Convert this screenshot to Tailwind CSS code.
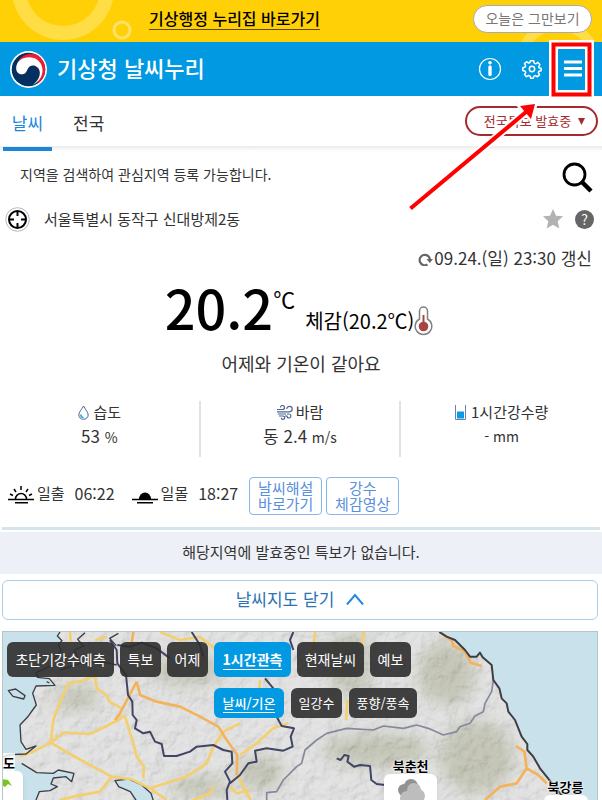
<!DOCTYPE html>
<html lang="ko">
<head>
    <meta charset="UTF-8">
    <meta name="viewport" content="width=device-width, initial-scale=1">
    <title>기상청 날씨누리</title>
    <script src="https://cdn.jsdelivr.net/npm/@tailwindcss/browser@4"></script>
</head>
<body class="relative flex h-screen flex-col overflow-hidden bg-white font-['Noto_Sans_CJK_KR',sans-serif] text-[#333]">

    <!-- Notice banner -->
    <div class="relative flex h-[42px] shrink-0 items-center justify-end overflow-hidden bg-[#ffd006] pr-[10px]">
        <svg class="absolute inset-0 h-full w-full" fill="none" stroke="#ffdd45">
            <circle cx="63" cy="-11" r="44" stroke-width="14"/>
            <circle cx="122" cy="30" r="8" stroke="#ffe168" stroke-width="3"/>
        </svg>
        <svg class="absolute right-0 top-0 h-[42px] w-[90px]" fill="none" stroke="#ffdd45">
            <circle cx="46" cy="62" r="37" stroke-width="10"/>
        </svg>
        <div class="absolute inset-x-0 top-[7px] flex justify-center pr-[133px]">
            <a href="#" class="border-b border-[#5c4b00] text-base leading-[22px] font-medium text-black">기상행정 누리집 바로가기</a>
        </div>
        <button class="relative mb-1 h-7 w-[119px] rounded-full border border-[#a9a9b5] bg-white pb-[2px] text-sm leading-5 text-[#777]">오늘은 그만보기</button>
    </div>

    <!-- Header -->
    <header class="flex h-[54px] shrink-0 items-center bg-[#0099e2] pr-[20px] pl-[10px] text-white">
        <svg class="size-[37px]" viewBox="0 0 108 108">
            <circle cx="54" cy="54" r="54" fill="#fff"/>
            <circle cx="54" cy="54" r="49" fill="#04305f"/>
            <path d="M24 30C36 8 70 -2 90 20C110 44 106 78 80 96L90 60L60 30L30 26Z" fill="#ed1b34"/>
            <path d="M18 50C18 28 38 17 58 18C82 19 96 38 95 58C94 76 84 91 67 99C80 88 88 76 87 62C86 48 77 42 67 42C52 42 52 57 45 64C36 72 18 67 18 50Z" fill="#fff"/>
        </svg>
        <h1 class="mb-1 ml-[10px] text-[22px] leading-8 font-medium">기상청 날씨누리</h1>
        <div class="ml-auto flex items-center">
            <button aria-label="정보" class="mr-[20px]">
                <svg class="size-6" viewBox="0 0 24 24" fill="none" stroke="#fff">
                    <circle cx="12" cy="12" r="10.5" stroke-width="1.2"/>
                    <circle cx="12" cy="5.8" r="1.8" fill="#fff" stroke="none"/>
                    <path d="M12 10V17.5" stroke-width="3.4" stroke-linecap="round"/>
                </svg>
            </button>
            <button aria-label="설정" class="mr-[22px]">
                <svg class="size-5" viewBox="0 0 24 24" fill="none" stroke="#fff" stroke-width="1.8" stroke-linejoin="round">
                    <circle cx="12" cy="12" r="3.2"/>
                    <path d="M10 2h4l.6 3 1.8.8L19 4l2.5 2.8-1.5 2.6.6 1.3L23 11v3l-2.7.8-.7 1.6 1.4 2.6-2.5 2.3-2.5-1.4-1.6.7L13.5 23h-3l-.8-2.5-1.7-.7-2.7 1.4L3 18.7l1.5-2.4-.7-1.7L1 13.700v-3.200l2.700-.8.7-1.600L3 5.500 5.500 3.300 8 4.900l1.500-.6z"/>
                </svg>
            </button>
            <button aria-label="메뉴">
                <svg class="h-[18px] w-[18px]" viewBox="0 0 18 18" stroke="#fff" stroke-width="3">
                    <path d="M0 2h18M0 8.500h18M0 15h18"/>
                </svg>
            </button>
        </div>
    </header>

    <!-- Tabs -->
    <nav class="flex h-[55px] shrink-0 items-stretch justify-between bg-linear-to-b from-white from-90% via-[#ececec] via-92% to-white pr-1 pl-[3px]">
        <div class="flex text-[17px] leading-[54px]">
            <a href="#" class="w-[49px] border-b-4 border-[#1b87dc] text-center text-[#1b87dc]">날씨</a>
            <a href="#" class="ml-[21px]">전국</a>
        </div>
        <button class="mt-[10px] flex h-[30px] w-[133px] items-center justify-center gap-[7px] rounded-full border-2 border-[#a52a2d] bg-white pl-[6px] text-[13px] text-[#a52a2d]">
            전국특보 발효중
            <svg class="size-[7px]" viewBox="0 0 7 7" fill="#a52a2d"><path d="M0 0h7L3.500 7z"/></svg>
        </button>
    </nav>

    <!-- Search and location -->
    <div class="flex h-[46px] shrink-0 items-center justify-between pr-[9px] pl-5">
        <p class="text-sm">지역을 검색하여 관심지역 등록 가능합니다.</p>
        <button aria-label="검색" class="mt-[6px]">
            <svg class="size-[31px]" viewBox="0 0 31 31" fill="none" stroke="#000">
                <circle cx="12.500" cy="12.500" r="10.500" stroke-width="2.800"/>
                <path d="M20.500 20.500L29 29" stroke-width="4.500"/>
            </svg>
        </button>
    </div>
    <div class="flex h-11 shrink-0 items-center pr-2 pl-[5px]">
        <button aria-label="현재 위치">
            <svg class="size-[25px]" viewBox="0 0 25 25" fill="none">
                <circle cx="12.500" cy="12.500" r="11.800" stroke="#b4b9c5"/>
                <circle cx="12.500" cy="12.500" r="8.500" stroke="#000" stroke-width="2"/>
                <path d="M12.500 4v5M12.500 16v5M4 12.500h5M16 12.500h5" stroke="#000" stroke-width="2"/>
            </svg>
        </button>
        <span class="ml-[14px] text-[15px]">서울특별시 동작구 신대방제2동</span>
        <button aria-label="관심지역" class="ml-auto">
            <svg class="size-5" viewBox="0 0 20 20" fill="#b2b2b2"><path d="M10 0l3 6.700 7 .6-5.300 5 1.600 7.200-6.300-3.700-6.300 3.700 1.600-7.200L0 7.300l7-.6z"/></svg>
        </button>
        <button aria-label="도움말" class="ml-3 size-[19px] rounded-full bg-[#666] text-center text-sm leading-[19px] text-white">?</button>
    </div>
    <div class="flex h-[37px] shrink-0 items-center justify-end pr-[10px] pb-1">
        <button aria-label="새로고침">
            <svg class="mt-[3px] h-[13px] w-[15px]" viewBox="0 0 15 13" fill="none" stroke="#666">
                <path d="M9.500 11.500a5.200 5.200 0 1 1 2.500-5" stroke-width="2.200"/>
                <path d="M8.500 6H15l-3.200 4z" fill="#666" stroke="none"/>
            </svg>
        </button>
        <span class="ml-[1px] text-[17px]">09.24.(일) 23:30 갱신</span>
    </div>

    <!-- Current weather -->
    <main class="shrink-0">
        <div class="flex h-[68px] items-end justify-center pr-1 text-black">
            <span class="mb-[10px] text-[54px] leading-[58px] font-medium">20.2</span>
            <span class="mb-[34px] text-[22px] leading-7">℃</span>
            <span class="mb-[11px] ml-[10px] text-xl leading-7">체감(20.2℃)</span>
            <svg class="mb-[10px] h-[30px] w-[19px]" viewBox="0 0 19 30" fill="none">
                <path d="M5.500 13V5a4 4 0 0 1 8 0v8a8.300 8.300 0 1 1-8 0z" stroke="#808080" stroke-width="1.500"/>
                <path d="M9.500 9v11" stroke="#a84444" stroke-width="2"/>
                <circle cx="9.500" cy="20.500" r="4.800" fill="#a84444"/>
            </svg>
        </div>
        <p class="mt-[3px] text-center text-lg leading-7">어제와 기온이 같아요</p>
        <dl class="mt-6 grid h-14 grid-cols-3 divide-x-2 divide-[#e2e2e2] text-center">
            <div>
                <dt class="flex items-center justify-center gap-[5px] text-[15px] leading-[22px]">
                    <svg class="h-[15px] w-[11px]" viewBox="0 0 11 15" fill="none">
                        <path d="M5.500 1C4 4 .8 7 .8 10a4.700 4.300 0 0 0 9.400 0C10.200 7 7 4 5.500 1z" stroke="#4d6490"/>
                        <path d="M2.800 9.500c0 2 1 3 2.700 3" stroke="#2aa5e5" stroke-width="1.500"/>
                    </svg>
                    습도
                </dt>
                <dd class="text-[17px] leading-[26px]">53 <span class="text-sm">%</span></dd>
            </div>
            <div>
                <dt class="flex items-center justify-center gap-[3px] text-[15px] leading-[22px]">
                    <svg class="h-[15px] w-4" viewBox="0 0 16 15" fill="none" stroke="#4d6490" stroke-width="1.200">
                        <path d="M0 4.500h5.500a2 2 0 1 0-2-2M0 6.800h12.500a2.700 2.700 0 1 0-2.700-2.700M1 9h8M2 11h4a1.700 1.700 0 1 1-1.700 1.700M8 11h2.500M10 9h2a2 2 0 1 1-2 2.500"/>
                    </svg>
                    바람
                </dt>
                <dd class="text-[17px] leading-[26px]">동 2.4 <span class="text-sm">m/s</span></dd>
            </div>
            <div>
                <dt class="flex items-center justify-center gap-[5px] text-[15px] leading-[22px]">
                    <svg class="h-[15px] w-[11px]" viewBox="0 0 11 15" fill="none">
                        <path d="M2 6.500h7v7H2z" fill="#0a9be3"/>
                        <path d="M.5 0v14.500h10V0" stroke="#6682b0"/>
                    </svg>
                    1시간강수량
                </dt>
                <dd class="text-sm leading-[26px]">- mm</dd>
            </div>
        </dl>
        <div class="mt-5 flex h-[38px] pl-2 text-[15px] leading-8">
            <svg class="mt-[9px] h-[18px] w-[26px]" viewBox="0 0 26 18" fill="none" stroke="#000" stroke-width="1.500">
                <path d="M0 13.500h26M7 16.700h13M7.500 13a5.500 5.500 0 1 1 11 0M13 0v4M6 3l2 3M20 3l-2 3M2 8l3 1.500M24 8l-3 1.500"/>
            </svg>
            <span class="ml-[3px]">일출</span>
            <span class="ml-[10px] text-base leading-8">06:22</span>
            <svg class="ml-[17px] mt-[9px] h-[18px] w-[26px]" viewBox="0 0 26 18" stroke="#000" stroke-width="1.500">
                <path d="M7 13a6 6.500 0 1 1 12 0z" stroke="none"/>
                <path d="M0 13.500h26M5 16.700h16"/>
            </svg>
            <span class="ml-[3px]">일몰</span>
            <span class="ml-[10px] text-base leading-8">18:27</span>
            <button class="ml-[11px] h-[38px] w-[73px] rounded border border-[#86b5ea] leading-4 text-[#5a8fdc]">날씨해설<br>바로가기</button>
            <button class="ml-1 h-[38px] w-[73px] rounded border border-[#86b5ea] leading-4 text-[#5a8fdc]">강수<br>체감영상</button>
        </div>
        <hr class="mx-[2px] mt-3 border-t-3 border-[#d5e4ed]">
        <p class="mt-[2px] h-[42px] bg-[#edf0f6] pb-1 text-center text-[15px] leading-10">해당지역에 발효중인 특보가 없습니다.</p>
        <div class="pt-[6px] pr-1 pl-[2px]">
            <button class="flex h-10 w-full items-center justify-center gap-3 rounded-md border border-[#abcde8] pb-[2px] text-[17px] text-[#2e72b4]">
                날씨지도 닫기
                <svg class="h-3 w-[18px]" viewBox="0 0 18 12" fill="none" stroke="#2388de" stroke-width="2"><path d="M1 11.500L9 2l8 9.500"/></svg>
            </button>
        </div>
    </main>

    <!-- Map -->
    <section class="relative mt-[11px] mr-1 ml-[2px] min-h-[169px] flex-1 overflow-hidden border border-b-0 border-[#b7c6cb] bg-[#c8e1ea]">
        <svg class="absolute inset-0 h-full w-full" viewBox="6 36 1788 504" preserveAspectRatio="xMidYMin slice" fill="none" stroke-linejoin="round">
            <defs>
                <filter id="relief" x="0" y="0" width="100%" height="100%">
                    <feTurbulence type="fractalNoise" baseFrequency="0.025" numOctaves="5" seed="8"/>
                    <feDiffuseLighting surfaceScale="14" lighting-color="#ffffff"><feDistantLight azimuth="225" elevation="58"/></feDiffuseLighting>
                </filter>
                <filter id="soft"><feGaussianBlur stdDeviation="22"/></filter>
                <clipPath id="land">
                    <path d="M180 36L172 48 186 62 175 75 184 92 160 118 155 135 130 148 108 158 112 172 148 176 165 196 108 198 98 220 109 255 98 270 82 292 60 315 63 365 78 388 60 400 30 404 6 410V430L65 430 110 458 160 460 175 450 222 460 215 485 198 470 160 474 153 492 172 500 150 512 118 515 108 540H1700L1640 470 1600 410 1582 380 1565 350 1545 300 1515 250 1505 220 1480 180 1475 135 1440 105 1410 110 1395 90 1365 60 1318 36Z"/>
                </clipPath>
            </defs>
            <g clip-path="url(#land)">
                <path d="M0 30h1800v520H0z" fill="#dddedd"/>
                <g fill="#a0a386" fill-opacity=".6" filter="url(#soft)">
                    <ellipse cx="230" cy="235" rx="70" ry="35"/>
                    <ellipse cx="560" cy="150" rx="110" ry="45"/>
                    <ellipse cx="780" cy="460" rx="70" ry="50"/>
                    <ellipse cx="1050" cy="130" rx="70" ry="90"/>
                    <ellipse cx="1340" cy="160" rx="85" ry="95"/>
                    <ellipse cx="1130" cy="390" rx="160" ry="50"/>
                    <ellipse cx="1430" cy="410" rx="110" ry="110"/>
                    <ellipse cx="600" cy="500" rx="90" ry="30"/>
                </g>
                <path d="M0 30h1800v520H0z" filter="url(#relief)" opacity=".2" fill="#fff"/>
            </g>
            <path d="M345 482l40-5 40 18 28 25 8 25h-50l-20-30-35-15z" fill="#c8e1ea" stroke="#3d3e43" stroke-width="4"/>
            <!-- roads -->
            <g stroke="#f3cf70" stroke-width="8">
                <path d="M290 165L240 185 205 190 185 235 160 300 152 368 100 395 60 408M152 368L190 338 270 342 320 318 355 300 375 285M152 368L215 405 270 435 335 470 395 478 450 505 560 470 620 430 640 380 670 335 720 310M335 470L300 515 220 530 180 540M375 290L400 370 410 410 432 440 430 475M450 505L500 540M720 405L770 370 820 325 865 310M285 165L290 205 320 225 328 245 365 265M715 470L735 510 752 540M690 500L710 520 750 510M640 500L630 520 580 540M210 36L212 65M780 180L775 250M945 36L940 80 900 160M1093 36L1080 90M1042 240L1038 300"/>
                <path d="M480 36L540 60 600 50 650 90M285 60L320 50"/>
            </g>
            <g stroke="#f3b35c" stroke-width="8">
                <path d="M400 36L388 120M410 185L360 280 345 300M410 185L420 225 470 245 540 260 600 290 655 320 680 360 712 405 710 465M1318 36L1355 62 1360 78 1395 95 1412 128 1445 138M1548 378L1573 395 1580 445 1550 490 1500 500 1455 540M1580 445L1615 465 1640 490"/>
            </g>
            <!-- province borders -->
            <g stroke="#414464" stroke-width="6">
                <path d="M330 60L350 90 352 130 378 165 384 225 397 245 398 285 410 300 405 325 430 340 450 335 465 365 485 372 492 408 530 408 570 395 590 380 640 375 670 390 695 395 697 430 675 455 690 485 680 510 682 540M690 490L720 465 745 430 770 425 765 392 800 385 850 392 878 380 872 350 882 325 845 318 830 290 815 260 820 205 795 175"/>
                <path d="M352 75L390 80 425 68 470 85 510 115M575 36L600 75 610 110M880 36L870 60 880 90"/>
                <path d="M1010 415L1022 420 1033 405 1046 408 1042 425 1062 440 1080 435 1110 438 1114 480 1130 492 1155 495"/>
            </g>
            <path d="M800 540L800 518 830 515 850 480 890 440 905 430 915 390 950 360 980 340 1040 325 1120 330 1150 318 1210 325 1250 315 1285 325 1330 345 1370 335 1380 320 1410 310 1425 288 1450 275 1455 250 1475 215 1480 180" stroke="#84889f" stroke-width="5"/>
            <!-- coastline -->
            <g stroke="#3d3e43" stroke-width="4">
                <path d="M180 36L172 48 186 62 175 75 184 92 160 118 155 135 130 148 108 158 112 172 148 176 165 196 108 198 98 220 109 255 98 270 82 292 60 315 63 365 78 388 108 378 78 402 30 404 6 412M65 430L110 458 160 460 175 450 222 460 215 485 198 470 160 474 153 492 172 500 150 512 118 515 108 540M255 38l-22 20 18 20-28 12 12 28M355 40l-26 15 20 22M25 212l22-5 28 20-4 10-32-8zM140 185l8 4M180 150l60-20 65-5 45 10"/>
            </g>
            <path d="M1318 36L1340 50 1365 60 1395 90 1410 110 1430 110 1440 98 1448 112 1475 135 1480 180 1498 205 1505 235 1520 250 1525 275 1545 300 1565 350 1582 372 1582 390 1600 410 1620 445 1640 470 1680 520 1700 540" stroke="#3d3e43" stroke-width="6"/>
        </svg>

        <!-- station pins -->
        <div class="absolute top-[121px] left-0 text-[13px] leading-5 font-bold text-black"><span class="bg-white/80">도</span></div>
        <div class="absolute top-[139px] -left-1 h-12 w-6 rounded-md bg-white shadow-md">
            <svg class="mt-2 ml-[3px] size-[10px]" viewBox="0 0 10 10" fill="#79c51c"><path d="M0 0l6 1 4 6-4-2-3 3-3-2z"/></svg>
        </div>
        <div class="absolute top-[125px] left-[64%] flex w-[54px] flex-col items-center pl-px">
            <span class="text-[13px] leading-[17px] font-bold text-black [text-shadow:0_0_2px_#fff,0_0_2px_#fff,0_0_2px_#fff]">북춘천</span>
            <div class="flex h-12 w-full justify-center rounded-md bg-white pt-1 shadow-md">
                <svg class="h-[28px] w-[30px]" viewBox="0 0 30 28">
                    <g fill="#929292"><circle cx="15" cy="8" r="7"/><circle cx="8" cy="12" r="6"/></g>
                    <g fill="#bdbdbd"><circle cx="18" cy="12" r="7"/><circle cx="11" cy="20" r="7"/><circle cx="22" cy="18" r="7"/></g>
                </svg>
            </div>
        </div>
        <div class="absolute top-[146px] left-[91%] flex w-11 flex-col items-center">
            <span class="text-[13px] leading-[17px] font-bold text-black [text-shadow:0_0_2px_#fff,0_0_2px_#fff,0_0_2px_#fff]">북강릉</span>
            <div class="h-10 w-full rounded-md bg-white shadow-md"></div>
        </div>

        <!-- layer buttons -->
        <div class="relative flex gap-[6px] pt-[10px] pl-1 text-sm text-white">
            <button class="h-[35px] w-[107px] shrink-0 rounded-md bg-[#2d2d2d]/90 pb-[2px]">초단기강수예측</button>
            <button class="h-[35px] w-[41px] shrink-0 rounded-md bg-[#2d2d2d]/90 pb-[2px]">특보</button>
            <button class="h-[35px] w-[41px] shrink-0 rounded-md bg-[#2d2d2d]/90 pb-[2px]">어제</button>
            <button class="h-[35px] w-[77px] shrink-0 rounded-md bg-[#0099e2] pb-[2px] font-bold"><span class="border-b border-white">1시간관측</span></button>
            <button class="h-[35px] w-[67px] shrink-0 rounded-md bg-[#2d2d2d]/90 pb-[2px]">현재날씨</button>
            <button class="h-[35px] w-[41px] shrink-0 rounded-md bg-[#2d2d2d]/90 pb-[2px]">예보</button>
        </div>
        <div class="relative flex gap-[7px] pt-[11px] pl-[211px] text-[13px] text-white">
            <button class="h-[30px] w-[70px] shrink-0 rounded-md bg-[#0099e2] font-medium"><span class="border-b border-white">날씨/기온</span></button>
            <button class="h-[30px] w-[51px] shrink-0 rounded-md bg-[#2d2d2d]/90">일강수</button>
            <button class="h-[30px] w-[68px] shrink-0 rounded-md bg-[#2d2d2d]/90">풍향/풍속</button>
        </div>
    </section>

    <!-- Guide: menu highlight and arrow -->
    <svg class="pointer-events-none absolute top-0 right-0 h-[215px] w-[202px]" viewBox="400 0 202 215" fill="none">
        <path d="M553.500 44.500h36v50h-36z" stroke="#fff" stroke-width="9"/>
        <path d="M553.500 44.500h36v50h-36z" stroke="#f00" stroke-width="4"/>
        <path d="M410.500 208.500L526 112" stroke="#fff" stroke-width="8"/>
        <path d="M535 104l-15 2 11 13z" fill="#fff" stroke="#fff" stroke-width="5"/>
        <path d="M410.500 208.500L526 112" stroke="#f00" stroke-width="4"/>
        <path d="M535 104l-15 2 11 13z" fill="#f00"/>
    </svg>
</body>
</html>
